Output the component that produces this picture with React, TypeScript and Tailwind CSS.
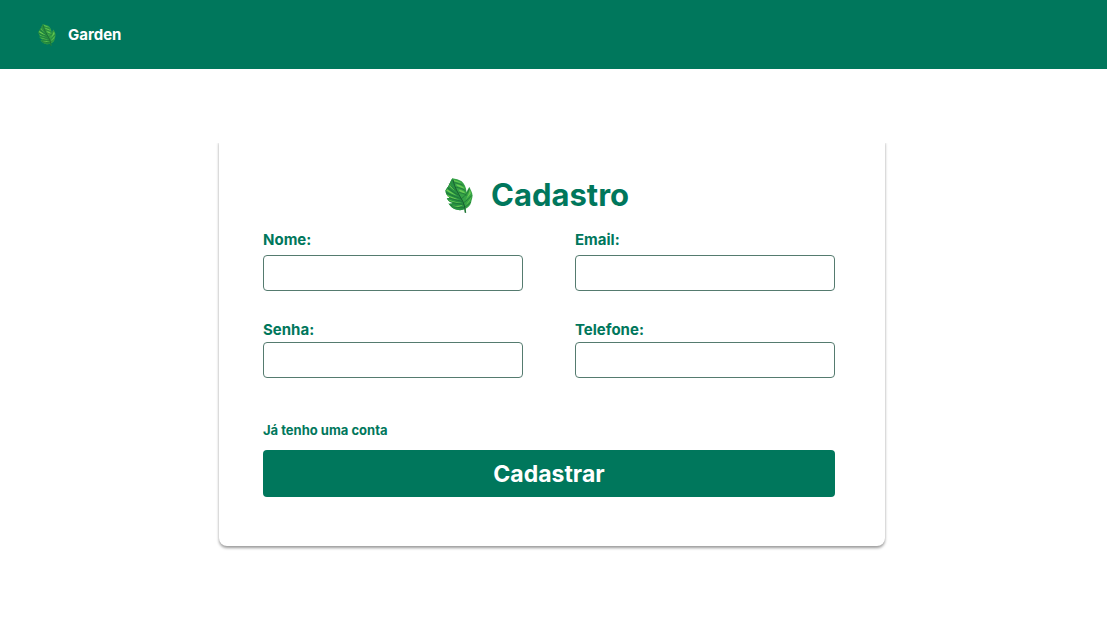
type LeafProps = { className: string };

function Leaf({ className }: LeafProps) {
  return (
    <svg viewBox="0 0 84 106" className={className} aria-hidden="true">
      <path
        d="M22 1C31 3 43 5 50 10C58 17 64 28 65 43C67 37 70 31 74 27C76 36 83 42 83 53C83 61 80 67 79 73C77 84 69 90 62 93L64 105L60 105L58 94C50 98 43 98 36 96C25 94 17 87 10 77C16 79 20 77 23 75C14 73 8 68 5 61C9 62 12 61 14 60C7 56 1 48 1 38C4 32 9 27 11 22C15 16 17 7 22 1Z"
        fill="#36a346"
      />
      <path
        d="M22 1C27 24 39 46 48 60C56 72 60 84 60 94C53 98 43 98 36 96C25 94 17 87 10 77C16 79 20 77 23 75C14 73 8 68 5 61C9 62 12 61 14 60C7 56 1 48 1 38C4 32 9 27 11 22C15 16 17 7 22 1Z"
        fill="#279142"
      />
      <path
        d="M25 5C35 8 43 10 49 16C41 15 34 12 28 10ZM33 19C43 21 54 25 59 32C49 30 41 27 35 23ZM41 35C49 36 58 40 61 46C54 46 48 44 44 40ZM75 34L78 47L62 66C68 56 73 46 75 34ZM80 55C77 68 71 74 63 82C69 72 75 65 80 55ZM15 18C19 27 25 33 31 38C23 35 16 29 13 24ZM6 34C15 40 27 48 36 54C25 51 11 44 3 38ZM4 50C16 56 31 62 42 65C29 65 15 60 8 56ZM10 65C24 70 38 74 49 75C36 77 22 73 14 69ZM20 83C32 86 46 84 55 80C45 89 31 89 24 86Z"
        fill="#6acb53"
      />
      <path
        d="M29 14C36 16 46 18 54 22M34 28C43 30 53 32 61 38M42 44C50 45 57 47 64 52M50 62C62 54 69 44 73 34M56 75C65 69 73 62 80 54M60 88C66 84 72 79 77 74M31 36C23 31 16 24 13 18M39 51C26 44 15 36 8 30M46 62C32 57 17 52 4 45M51 71C39 68 27 65 14 60M56 80C45 79 36 77 24 75M58 90C45 91 30 89 18 83"
        fill="none"
        stroke="#1a6b35"
        strokeWidth="2"
        strokeLinecap="round"
      />
      <path
        d="M24 7C29 29 39 46 48 61C56 74 61 87 61 104"
        fill="none"
        stroke="#175e31"
        strokeWidth="3"
        strokeLinecap="round"
      />
    </svg>
  );
}

type FieldProps = {
  id: string;
  label: string;
  type: string;
  compact?: boolean;
};

function Field({ id, label, type, compact = false }: FieldProps) {
  return (
    <div className={compact ? "flex flex-col gap-0.5" : "flex flex-col gap-[5px]"}>
      <label htmlFor={id} className="text-[15px] leading-5 font-bold">
        {label}
      </label>
      <input
        id={id}
        name={id}
        type={type}
        className="h-9 w-full rounded-sm border border-[#557b6f] bg-white px-3 text-sm outline-none focus:border-[#00775c]"
      />
    </div>
  );
}

export default function App() {
  return (
    <div className="min-h-screen bg-white font-['Inter',sans-serif] text-[#00775c]">
      <header className="flex h-[69px] items-center gap-3 bg-[#00775c] px-[38px] text-white">
        <Leaf className="h-[22px] w-[18px]" />
        <span className="text-[15px] leading-5 font-bold">Garden</span>
      </header>

      <main className="flex justify-center pt-[72px] pr-[3px]">
        <form
          className="flex w-full max-w-[666px] flex-col rounded-b-lg bg-white pt-9 pr-[50px] pb-[49px] pl-11 shadow-[0_2px_3px_rgba(0,0,0,0.4)] [clip-path:inset(2px_-8px_-8px_-8px)]"
          onSubmit={(event) => event.preventDefault()}
        >
          <div className="flex items-center justify-center gap-[18px] pr-6">
            <Leaf className="h-[35px] w-7" />
            <h1 className="text-[31px] leading-9 font-bold">Cadastro</h1>
          </div>

          <div className="mt-[17px] grid grid-cols-2 gap-x-[52px] gap-y-[29px]">
            <Field id="nome" label="Nome:" type="text" />
            <Field id="email" label="Email:" type="email" />
            <Field id="senha" label="Senha:" type="password" compact />
            <Field id="telefone" label="Telefone:" type="tel" compact />
          </div>

          <a href="#entrar" className="mt-11 self-start text-[13px] leading-4 font-bold">
            Já tenho uma conta
          </a>
          <button
            type="submit"
            className="mt-3 h-[47px] w-full rounded-sm bg-[#00775c] text-[23px] leading-7 font-bold text-white"
          >
            Cadastrar
          </button>
        </form>
      </main>
    </div>
  );
}
